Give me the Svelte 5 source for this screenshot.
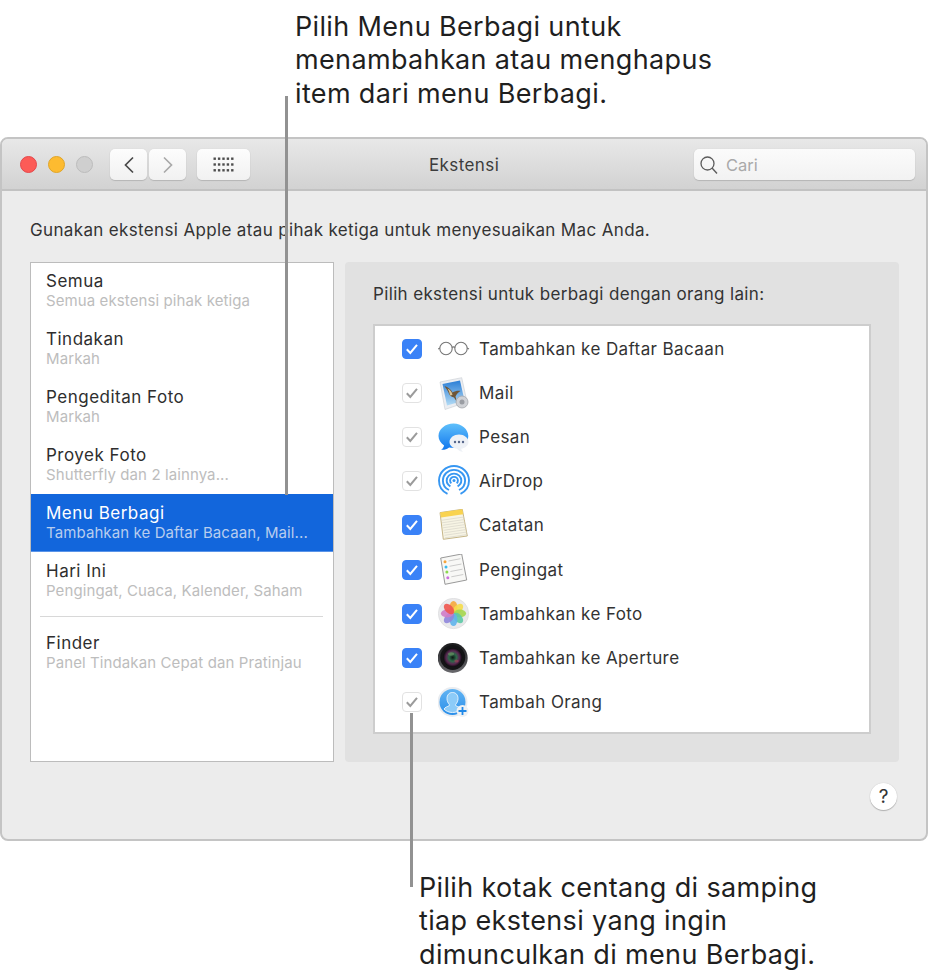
<script>
    const sidebar = [
        { title: 'Semua', sub: 'Semua ekstensi pihak ketiga' },
        { title: 'Tindakan', sub: 'Markah' },
        { title: 'Pengeditan Foto', sub: 'Markah' },
        { title: 'Proyek Foto', sub: 'Shutterfly dan 2 lainnya...' },
        { title: 'Menu Berbagi', sub: 'Tambahkan ke Daftar Bacaan, Mail...', selected: true },
        { title: 'Hari Ini', sub: 'Pengingat, Cuaca, Kalender, Saham' }
    ];

    const extensions = [
        { id: 'glasses', label: 'Tambahkan ke Daftar Bacaan', on: true },
        { id: 'mail', label: 'Mail', on: false },
        { id: 'messages', label: 'Pesan', on: false },
        { id: 'airdrop', label: 'AirDrop', on: false },
        { id: 'notes', label: 'Catatan', on: true },
        { id: 'reminders', label: 'Pengingat', on: true },
        { id: 'photos', label: 'Tambahkan ke Foto', on: true },
        { id: 'aperture', label: 'Tambahkan ke Aperture', on: true },
        { id: 'person', label: 'Tambah Orang', on: false }
    ];

    const petals = [
        ['#f6a93b', 0], ['#f5dc4a', 45], ['#a5d64f', 90], ['#5cc9a6', 135],
        ['#5fb4ec', 180], ['#8f86dc', 225], ['#d07cc8', 270], ['#f0574f', 315]
    ];
</script>

<div class="page">
    <p class="caption top-caption">Pilih Menu Berbagi untuk<br />menambahkan atau menghapus<br />item dari menu Berbagi.</p>

    <div class="window">
        <header class="titlebar">
            <div class="lights">
                <span class="light red"></span>
                <span class="light yellow"></span>
                <span class="light grey"></span>
            </div>
            <div class="nav">
                <button class="tool" aria-label="Kembali">
                    <svg width="12" height="18" viewBox="0 0 12 18"><path d="M10 1.500 2.500 9l7.500 7.500" fill="none" stroke="#4a4a4a" stroke-width="1.700" /></svg>
                </button>
                <button class="tool" aria-label="Maju">
                    <svg width="12" height="18" viewBox="0 0 12 18"><path d="M2 1.500 9.500 9 2 16.500" fill="none" stroke="#a9a9a9" stroke-width="1.700" /></svg>
                </button>
            </div>
            <button class="tool grid" aria-label="Tampilkan semua">
                <svg width="21" height="15" viewBox="0 0 21 15" fill="#4d4d4d">
                    {#each [0, 1, 2] as r}
                        {#each [0, 1, 2, 3, 4] as c}
                            <rect x={c * 4.400 + 0.500} y={r * 5.800 + 0.500} width="2.400" height="2.400" />
                        {/each}
                    {/each}
                </svg>
            </button>
            <span class="win-title">Ekstensi</span>
            <div class="search">
                <svg width="20" height="20" viewBox="0 0 20 20"><circle cx="8.500" cy="8.500" r="6.500" fill="none" stroke="#5c5c5c" stroke-width="1.300" /><path d="m13 13 5 5.500" stroke="#5c5c5c" stroke-width="1.400" /></svg>
                <span>Cari</span>
            </div>
        </header>

        <div class="body">
            <p class="intro">Gunakan ekstensi Apple atau pihak ketiga untuk menyesuaikan Mac Anda.</p>
            <div class="columns">
                <nav class="sidebar">
                    {#each sidebar as item}
                        <div class="side-item" class:selected={item.selected}>
                            <span class="side-title">{item.title}</span>
                            <span class="side-sub">{item.sub}</span>
                        </div>
                    {/each}
                    <div class="side-sep"></div>
                    <div class="side-item finder">
                        <span class="side-title">Finder</span>
                        <span class="side-sub">Panel Tindakan Cepat dan Pratinjau</span>
                    </div>
                </nav>

                <section class="panel">
                    <p class="panel-title">Pilih ekstensi untuk berbagi dengan orang lain:</p>
                    <ul class="ext-list">
                        {#each extensions as ext}
                            <li class="ext">
                                <span class="check" class:on={ext.on}>
                                    <svg width="14" height="12" viewBox="0 0 14 12"><path d="M1.800 6.300 5.300 10 12 1.800" fill="none" stroke={ext.on ? '#fff' : '#9b9b9b'} stroke-width="2" /></svg>
                                </span>
                                <span class="ext-icon">
                                    {#if ext.id === 'glasses'}
                                        <svg width="32" height="32" viewBox="0 0 32 32" fill="none" stroke="#757575" stroke-width="1.100">
                                            <circle cx="8" cy="15.500" r="6.200" />
                                            <circle cx="23" cy="15.500" r="6.200" />
                                            <path d="M14 14.500c.8-.8 2.200-.8 3 0M1.900 15 0 16M29.100 15l1.900 1" />
                                        </svg>
                                    {:else if ext.id === 'mail'}
                                        <svg width="32" height="33" viewBox="0 0 32 33">
                                            <defs>
                                                <linearGradient id="sky" x1="0" y1="0" x2="0" y2="1"><stop offset="0" stop-color="#2a7ed6" /><stop offset="1" stop-color="#b4dcf5" /></linearGradient>
                                            </defs>
                                            <path d="m2 5 21.700-4.300L29 25 7 32.500z" fill="#eceef2" stroke="#c8ccd2" stroke-width=".6" />
                                            <path d="m4.500 7 17.500-3.500 4.500 20-17.500 5z" fill="url(#sky)" />
                                            <path d="M6.500 9c3.500 1 6.500 3.500 8 6.500 2.500-1.500 5.500-2 8-1.500-2 1-4 3-5 5.500l1.500 5.500-3-4.500c-3-.5-5-2.500-5.500-5C9.500 13 7.500 11 6.500 9z" fill="#6e5638" />
                                            <path d="M9.500 11.500c2.500 1 4.500 3.500 5 6.500l-2.500.5c-.3-2.500-1.200-5-2.500-7z" fill="#d8c296" />
                                            <circle cx="24" cy="25" r="6" fill="#d0d2d6" stroke="#a4a7ac" stroke-width=".8" />
                                            <circle cx="24" cy="25" r="2.500" fill="#9a9da3" />
                                        </svg>
                                    {:else if ext.id === 'messages'}
                                        <svg width="32" height="32" viewBox="0 0 32 32">
                                            <defs>
                                                <linearGradient id="bubble" x1="0" y1="0" x2="0" y2="1"><stop offset="0" stop-color="#5fc0fb" /><stop offset="1" stop-color="#1277ee" /></linearGradient>
                                            </defs>
                                            <path d="M15.500 2.500C7.400 2.500.5 8 .5 15c0 3.800 2.200 7.200 5.600 9.400-.4 2-1.500 3.200-3 4.400 3.400.2 6-.8 8-2.400 1.300.3 2.800.4 4.400.4 8 0 14.800-5 14.800-11.800S23.500 2.500 15.500 2.500z" fill="url(#bubble)" />
                                            <path d="M21 13.500c-5 0-9.500 3.200-9.500 7.400 0 3.500 3.300 6.300 7.500 6.800 1 1.300 3.200 2.800 6 3.100-1-.8-1.700-1.800-1.900-3C27.500 27 30.500 24.300 30.500 21c0-4.200-4.500-7.500-9.500-7.500z" fill="#eef1f6" />
                                            <circle cx="17" cy="21" r="1.200" fill="#55658a" /><circle cx="21" cy="21" r="1.200" fill="#55658a" /><circle cx="25" cy="21" r="1.200" fill="#55658a" />
                                        </svg>
                                    {:else if ext.id === 'airdrop'}
                                        <svg width="32" height="32" viewBox="0 0 32 32" fill="none" stroke="#3797f2" stroke-width="1.900">
                                            <path d="M9.500 28.800C4.200 26.300 1 21 1 15.500 1 7.500 7.700 1 16 1s15 6.500 15 14.500c0 5.500-3.200 10.800-8.500 13.300" />
                                            <path d="M11 25C7.300 23.300 4.900 19.600 4.900 15.500 4.900 9.600 9.900 4.900 16 4.900s11.100 4.700 11.100 10.600c0 4.100-2.400 7.800-6.100 9.500" />
                                            <path d="M12.400 21.300C10.100 20 8.700 17.900 8.700 15.500c0-3.800 3.300-6.900 7.300-6.900s7.300 3.100 7.300 6.900c0 2.400-1.400 4.500-3.700 5.800" />
                                            <path d="M13.400 18.200c-1-.7-1.300-1.700-1.300-2.700 0-2 1.700-3.600 3.900-3.600s3.900 1.600 3.900 3.600c0 1-.3 2-1.300 2.700" />
                                            <circle cx="16" cy="15.500" r="1.500" fill="#3797f2" stroke="none" />
                                        </svg>
                                    {:else if ext.id === 'notes'}
                                        <svg width="32" height="32" viewBox="0 0 32 32">
                                            <path d="m2 3.600 22.300-3.300 5 26.700L5.300 30.300z" fill="#f7f4e4" stroke="#bfae7c" stroke-width=".9" />
                                            <path d="m2 3.600 22.300-3.300.9 5L3 8.600z" fill="#f9d34f" />
                                            {#each [0, 1, 2, 3, 4, 5, 6, 7] as n}
                                                <path d="m{3.500 + n * 0.500} {11.300 + n * 2.500} 22.500-3.300" stroke="#d8d6ca" stroke-width=".7" />
                                            {/each}
                                        </svg>
                                    {:else if ext.id === 'reminders'}
                                        <svg width="32" height="32" viewBox="0 0 32 32">
                                            <path d="m2.700 4 21-4 5 26-21.700 4.300z" fill="#f8f8f6" stroke="#8d8d8d" stroke-width=".9" />
                                            <circle cx="7" cy="7.700" r="1.500" fill="#f5a33b" /><circle cx="8" cy="13" r="1.500" fill="#38b9ef" /><circle cx="8.900" cy="18" r="1.500" fill="#8bd94f" /><circle cx="9.800" cy="23.700" r="1.500" fill="#cd6fe0" />
                                            <path d="m10.500 7 12-2.300M11.500 12.300l12-2.300M12.400 17.500l12-2.300M13.300 22.800l12-2.300" stroke="#b8b8b8" stroke-width=".7" />
                                        </svg>
                                    {:else if ext.id === 'photos'}
                                        <svg width="32" height="32" viewBox="0 0 32 32">
                                            <circle cx="15.500" cy="15.500" r="15.200" fill="#e9e9eb" stroke="#d8d8da" stroke-width=".6" />
                                            <g transform="translate(-.5 0)">
                                                {#each petals as [color, deg]}
                                                    <ellipse cx="16" cy="9.200" rx="3.900" ry="6.300" fill={color} opacity=".9" transform="rotate({deg} 16 15.500)" />
                                                {/each}
                                            </g>
                                        </svg>
                                    {:else if ext.id === 'aperture'}
                                        <svg width="32" height="32" viewBox="0 0 32 32">
                                            <defs>
                                                <linearGradient id="barrel" x1="0" y1="0" x2="0" y2="1"><stop offset="0" stop-color="#1a1a1c" /><stop offset="1" stop-color="#6a6a6e" /></linearGradient>
                                                <radialGradient id="lens"><stop offset="0" stop-color="#0b1512" /><stop offset=".4" stop-color="#2d6a4a" /><stop offset=".7" stop-color="#5a2852" /><stop offset="1" stop-color="#0b0b0e" /></radialGradient>
                                            </defs>
                                            <circle cx="14.700" cy="16" r="15" fill="url(#barrel)" />
                                            <circle cx="14.700" cy="15.500" r="12.500" fill="#141416" />
                                            <circle cx="14.700" cy="15.500" r="9.500" fill="url(#lens)" />
                                            <ellipse cx="13" cy="12" rx="3" ry="1.700" fill="#78a06a" opacity=".55" />
                                            <ellipse cx="18.500" cy="19" rx="2.200" ry="1.500" fill="#b3405a" opacity=".55" />
                                        </svg>
                                    {:else}
                                        <svg width="32" height="32" viewBox="0 0 32 32">
                                            <defs>
                                                <linearGradient id="contact" x1="0" y1="0" x2="0" y2="1"><stop offset="0" stop-color="#62b4f3" /><stop offset="1" stop-color="#2a8fea" /></linearGradient>
                                            </defs>
                                            <circle cx="14.500" cy="16" r="15" fill="#e9ecf0" />
                                            <circle cx="14.500" cy="16" r="13" fill="url(#contact)" />
                                            <path d="M14.500 6.500c-3.500 0-5.500 2.600-5.500 6 0 2.500 1 4.500 2.300 5.800v1.400c-1.800 1-4.300 1.500-5.300 3.300 2 2.200 5 3.500 8.500 3.500s6.500-1.300 8.500-3.500c-1-1.800-3.500-2.300-5.300-3.300v-1.400c1.300-1.300 2.300-3.300 2.300-5.800 0-3.400-2-6-5.500-6z" fill="#8ccbf8" stroke="#e4f2fd" stroke-width="1" />
                                            <circle cx="24.500" cy="25" r="6" fill="#eef1f4" />
                                            <path d="M24.500 21v8M20.500 25h8" stroke="#1f88e8" stroke-width="1.800" />
                                        </svg>
                                    {/if}
                                </span>
                                <span class="ext-label">{ext.label}</span>
                            </li>
                        {/each}
                    </ul>
                </section>
            </div>
            <div class="footer">
                <button class="help">?</button>
            </div>
        </div>
    </div>

    <p class="caption bottom-caption">Pilih kotak centang di samping<br />tiap ekstensi yang ingin<br />dimunculkan di menu Berbagi.</p>

    <!-- leader lines sit over the window -->
    <span class="leader leader-a"></span>
    <span class="leader leader-b"></span>
</div>

<style>
    :global(body) {
        background: #fff;
    }

    .page {
        position: relative;
        width: 931px;
        height: 979px;
        font-family: Inter, "Liberation Sans", sans-serif;
        color: #2b2b2b;
        overflow: hidden;
    }

    p {
        margin: 0;
    }

    .caption {
        font-size: 27px;
        line-height: 33.500px;
        letter-spacing: .35px;
        color: #1f1f1f;
    }

    .top-caption {
        height: 137px;
        box-sizing: border-box;
        padding: 9.500px 0 0 295px;
    }

    .bottom-caption {
        padding: 29.500px 0 0 419px;
    }

    .leader {
        position: absolute;
        width: 3px;
        background: #929292;
    }

    .leader-a {
        left: 285px;
        top: 96px;
        height: 399px;
    }

    .leader-b {
        left: 410px;
        top: 713px;
        height: 174px;
    }

    .window {
        width: 928px;
        height: 704px;
        box-sizing: border-box;
        border: 2px solid #c4c4c4;
        border-radius: 8px;
        background: #ececec;
        display: flex;
        flex-direction: column;
    }

    .titlebar {
        height: 52px;
        flex: none;
        box-sizing: border-box;
        display: flex;
        align-items: center;
        position: relative;
        padding: 1px 11px 0 18px;
        background: linear-gradient(#e8e8e8, #d2d2d2);
        border-bottom: 2px solid #c2c2c2;
        border-radius: 6px 6px 0 0;
    }

    .lights {
        display: flex;
        gap: 11px;
    }

    .light {
        width: 17px;
        height: 17px;
        border-radius: 50%;
        box-sizing: border-box;
    }

    .red {
        background: #fc5b57;
        border: 1px solid #e4474b;
    }

    .yellow {
        background: #fdbb30;
        border: 1px solid #e0a528;
    }

    .grey {
        background: #cfcfcf;
        border: 1px solid #bcbcbc;
    }

    .nav {
        display: flex;
        gap: 2px;
        margin-left: 17px;
    }

    .tool {
        width: 37px;
        height: 31px;
        padding: 0;
        border: none;
        border-radius: 5px;
        background: linear-gradient(#fdfdfd, #f1f1f1);
        box-shadow: 0 1px 1px #b5b5b5, 0 0 1px #c8c8c8;
        display: flex;
        align-items: center;
        justify-content: center;
    }

    .grid {
        width: 53px;
        margin-left: 11px;
    }

    .win-title {
        position: absolute;
        left: 427px;
        top: 16px;
        font-size: 17px;
        letter-spacing: .4px;
        color: #3c3c3c;
    }

    .search {
        margin-left: auto;
        width: 221px;
        height: 31px;
        box-sizing: border-box;
        display: flex;
        align-items: center;
        gap: 7px;
        padding-left: 5px;
        border-radius: 5px;
        background: linear-gradient(#fbfbfb, #f2f2f2);
        box-shadow: 0 1px 1px #b5b5b5, 0 0 1px #c8c8c8;
        font-size: 16.500px;
        color: #a9a9a9;
    }

    .body {
        flex: 1;
        display: flex;
        flex-direction: column;
        padding: 29px 28px 0;
    }

    .intro {
        font-size: 17px;
        line-height: 20px;
        letter-spacing: .35px;
        color: #333;
    }

    .columns {
        display: flex;
        gap: 11px;
        margin-top: 22px;
        width: 869px;
    }

    .sidebar {
        width: 304px;
        height: 500px;
        box-sizing: border-box;
        background: #fff;
        border: 1px solid #bcbcbc;
        flex: none;
    }

    .side-item {
        height: 58px;
        box-sizing: border-box;
        padding: 8px 15px 0;
        display: flex;
        flex-direction: column;
    }

    .side-item.selected {
        margin: -1px 0 1px;
        padding-top: 9px;
        background: #1266dc;
        border-bottom: 1px solid #5a94e8;
    }

    .side-title {
        font-size: 17px;
        line-height: 20px;
        letter-spacing: .5px;
        color: #2e2e2e;
    }

    .side-sub {
        font-size: 15px;
        line-height: 20px;
        letter-spacing: .1px;
        color: #bdbdbd;
        white-space: nowrap;
    }

    .selected .side-title {
        color: #fff;
    }

    .selected .side-sub {
        color: #b8cdee;
    }

    .side-sep {
        height: 1px;
        margin: 5px 10px 0 9px;
        background: #d8d8d8;
    }

    .finder {
        margin-top: 8px;
    }

    .panel {
        flex: 1;
        height: 500px;
        box-sizing: border-box;
        background: #e1e1e1;
        border-radius: 4px;
        padding: 22px 28px 0;
    }

    .panel-title {
        font-size: 17px;
        line-height: 20px;
        letter-spacing: .35px;
        color: #333;
    }

    .ext-list {
        list-style: none;
        margin: 20px 0 0;
        padding: 1px 0 0;
        width: 498px;
        height: 410px;
        box-sizing: border-box;
        background: #fff;
        border: 2px solid #cdcdcd;
    }

    .ext {
        height: 44.100px;
        display: flex;
        align-items: center;
        padding-left: 27px;
    }

    .check {
        width: 20px;
        height: 20px;
        flex: none;
        box-sizing: border-box;
        border-radius: 4px;
        border: 1px solid #e2e2e2;
        background: #fff;
        display: flex;
        align-items: center;
        justify-content: center;
    }

    .check.on {
        background: #3a82f7;
        border-color: #3a82f7;
    }

    .ext-icon {
        width: 32px;
        height: 32px;
        flex: none;
        margin-left: 16px;
        display: block;
    }

    .ext-label {
        margin-left: 9px;
        font-size: 17px;
        letter-spacing: .4px;
        color: #333;
    }

    .footer {
        flex: 1;
        display: flex;
        justify-content: flex-end;
        padding: 21px 0 0;
    }

    .help {
        width: 27px;
        height: 27px;
        margin-right: 1px;
        padding: 0;
        border: none;
        border-radius: 50%;
        background: #fff;
        box-shadow: 0 1px 1px #b0b0b0, 0 0 1px #bcbcbc;
        font-family: inherit;
        font-size: 19px;
        color: #333;
    }
</style>
